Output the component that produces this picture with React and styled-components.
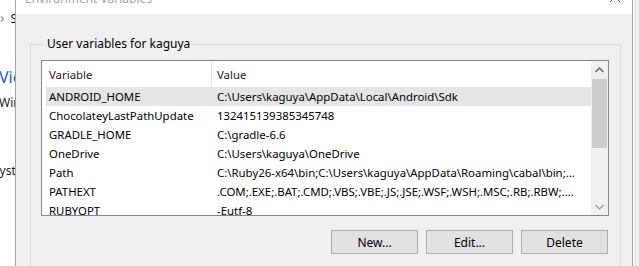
import styled, { createGlobalStyle } from 'styled-components';

const GlobalStyle = createGlobalStyle`
  html, body {
    margin: 0;
    padding: 0;
    background: #ffffff;
  }
  body {
    font-family: "Noto Sans", "Open Sans", sans-serif;
  }
`;

const rows = [
  { name: 'ANDROID_HOME', value: 'C:\\Users\\kaguya\\AppData\\Local\\Android\\Sdk', hot: true },
  { name: 'ChocolateyLastPathUpdate', value: '132415139385345748' },
  { name: 'GRADLE_HOME', value: 'C:\\gradle-6.6' },
  { name: 'OneDrive', value: 'C:\\Users\\kaguya\\OneDrive' },
  { name: 'Path', value: 'C:\\Ruby26-x64\\bin;C:\\Users\\kaguya\\AppData\\Roaming\\cabal\\bin;...' },
  { name: 'PATHEXT', value: '.COM;.EXE;.BAT;.CMD;.VBS;.VBE;.JS;.JSE;.WSF;.WSH;.MSC;.RB;.RBW;....' },
  { name: 'RUBYOPT', value: '-Eutf-8' },
];

const App = () => {
  return (
    <>
      <GlobalStyle />
      <Page>
        <Behind>
          <BehindLine top={10} shift={0}>
            <Chevron>›</Chevron>
            <span>&nbsp;&nbsp;S</span>
          </BehindLine>
          <BehindLink top={40} shift={-1}>View</BehindLink>
          <BehindLine top={8} shift={-1}>Windows</BehindLine>
          <BehindLine top={52} shift={-7}>System</BehindLine>
        </Behind>

        <Dialog>
          <TitleBar>
            <Title>Environment Variables</Title>
            <Close width="12" height="12" viewBox="0 0 12 12">
              <path d="M1 1 L11 11 M11 1 L1 11" stroke="#5c5c5c" strokeWidth="1" fill="none" />
            </Close>
          </TitleBar>

          <Body>
            <Group>
              <Legend>User variables for kaguya</Legend>

              <ListView>
                <ListArea>
                  <HeaderRow>
                    <HeaderCell first>Variable</HeaderCell>
                    <HeaderCell>Value</HeaderCell>
                  </HeaderRow>
                  {rows.map((row) => (
                    <Row key={row.name} hot={row.hot}>
                      <NameCell>{row.name}</NameCell>
                      <ValueCell>{row.value}</ValueCell>
                    </Row>
                  ))}
                </ListArea>
                <ScrollBar>
                  <ScrollArrow>
                    <svg width="9" height="6" viewBox="0 0 9 6">
                      <path d="M0.5 5 L4.5 1 L8.5 5" stroke="#606060" strokeWidth="1.4" fill="none" />
                    </svg>
                  </ScrollArrow>
                  <Thumb />
                  <Track />
                  <ScrollArrow>
                    <svg width="9" height="6" viewBox="0 0 9 6">
                      <path d="M0.5 1 L4.5 5 L8.5 1" stroke="#a0a0a0" strokeWidth="1.4" fill="none" />
                    </svg>
                  </ScrollArrow>
                </ScrollBar>
              </ListView>

              <Buttons>
                <Button>New...</Button>
                <Button>Edit...</Button>
                <Button>Delete</Button>
              </Buttons>
            </Group>
          </Body>
        </Dialog>

        <Edge />
      </Page>
    </>
  );
};

const Page = styled.div`
  width: 639px;
  height: 266px;
  display: flex;
  overflow: hidden;
  background: #ffffff;
`;

const Behind = styled.div`
  width: 15px;
  flex: none;
  overflow: hidden;
  display: flex;
  flex-direction: column;
  background: #ffffff;
  white-space: nowrap;
`;

const BehindLine = styled.div`
  margin-top: ${(p) => p.top}px;
  margin-left: ${(p) => p.shift}px;
  font-size: 12px;
  line-height: 16px;
  color: #1a1a1a;
`;

const BehindLink = styled(BehindLine)`
  font-size: 16px;
  line-height: 20px;
  color: #1a5fb4;
`;

const Chevron = styled.span`
  color: #8a8a8a;
  font-size: 14px;
`;

const Dialog = styled.div`
  width: 616px;
  flex: none;
  display: flex;
  flex-direction: column;
  border-left: 1px solid #a6a6a6;
  border-right: 1px solid #a6a6a6;
`;

const TitleBar = styled.div`
  height: 14px;
  flex: none;
  display: flex;
  align-items: flex-end;
  justify-content: space-between;
  padding: 0 11px 0 9px;
  background: #ffffff;
  overflow: hidden;
`;

const Title = styled.span`
  font-size: 12px;
  line-height: 16px;
  margin-bottom: 7px;
  color: #a3a3a3;
  white-space: nowrap;
`;

const Close = styled.svg`
  margin-bottom: 11px;
  flex: none;
`;

const Body = styled.div`
  flex: 1;
  background: #f0f0f0;
  padding: 22px 11px 0 14px;
  overflow: hidden;
`;

const Group = styled.fieldset`
  margin: 0;
  padding: 0 11px 20px 10px;
  border: 1px solid #dcdcdc;
  min-width: 0;
  height: 260px;
  box-sizing: border-box;
`;

const Legend = styled.legend`
  margin-left: 3px;
  padding: 0 3px;
  font-size: 12px;
  line-height: 16px;
  color: #000000;
`;

const ListView = styled.div`
  margin-top: 8px;
  height: 156px;
  display: flex;
  border: 1px solid #828790;
  background: #ffffff;
  box-sizing: border-box;
`;

const ListArea = styled.div`
  flex: 1;
  min-width: 0;
  overflow: hidden;
  padding: 1px 0 0 4px;
  font-size: 11.4px;
`;

const HeaderRow = styled.div`
  height: 25px;
  display: flex;
  align-items: stretch;
`;

const HeaderCell = styled.div`
  width: ${(p) => (p.first ? '166px' : 'auto')};
  flex: ${(p) => (p.first ? 'none' : '1')};
  box-sizing: border-box;
  padding-left: ${(p) => (p.first ? '3px' : '5px')};
  border-right: ${(p) => (p.first ? '1px solid #e5e5e5' : 'none')};
  display: flex;
  align-items: center;
  color: #1a1a1a;
`;

const Row = styled.div`
  height: 19px;
  display: flex;
  align-items: center;
  background: ${(p) => (p.hot ? '#e5e5e5' : 'transparent')};
  color: #000000;
  white-space: nowrap;
`;

const NameCell = styled.div`
  width: 166px;
  flex: none;
  box-sizing: border-box;
  padding-left: 3px;
  overflow: hidden;
`;

const ValueCell = styled.div`
  flex: 1;
  min-width: 0;
  padding-left: 5px;
  overflow: hidden;
`;

const ScrollBar = styled.div`
  width: 17px;
  flex: none;
  display: flex;
  flex-direction: column;
  background: #f0f0f0;
`;

const ScrollArrow = styled.div`
  height: 17px;
  flex: none;
  display: flex;
  align-items: center;
  justify-content: center;
`;

const Thumb = styled.div`
  height: 69px;
  margin: 1px 1px 0;
  flex: none;
  background: #cdcdcd;
`;

const Track = styled.div`
  flex: 1;
`;

const Buttons = styled.div`
  margin-top: 14px;
  display: flex;
  justify-content: flex-end;
  gap: 8px;
  padding-right: 1px;
`;

const Button = styled.button`
  width: 87px;
  height: 24px;
  box-sizing: border-box;
  border: 1px solid #adadad;
  background: #e1e1e1;
  font-family: "Noto Sans", "Open Sans", sans-serif;
  font-size: 12px;
  color: #000000;
  padding: 0;
`;

const Edge = styled.div`
  flex: 1;
  background: #f0f0f0;
  border-left: 2px solid #f7f7f7;
  box-shadow: inset 1px 0 0 #e0e0e0;
`;

export default App;
